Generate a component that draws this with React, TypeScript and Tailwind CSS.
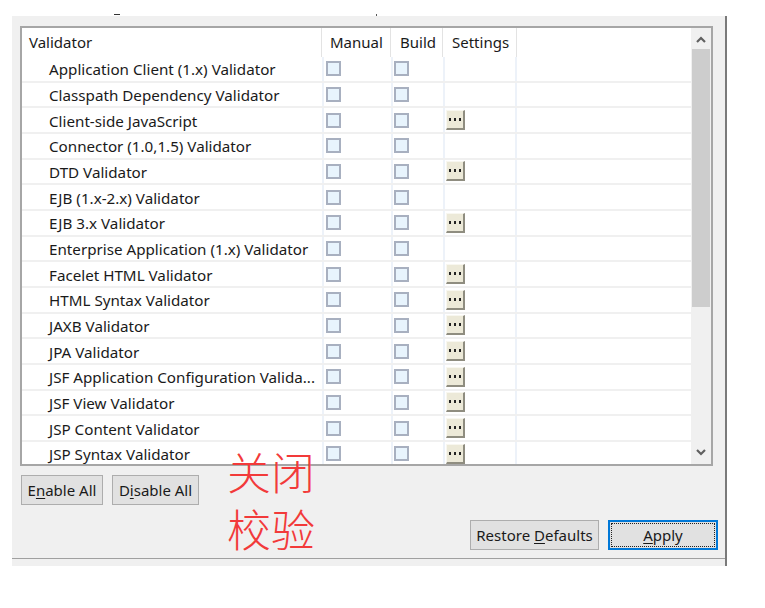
import React from "react";

const rows: { name: string; settings: boolean }[] = [
  { name: "Application Client (1.x) Validator", settings: false },
  { name: "Classpath Dependency Validator", settings: false },
  { name: "Client-side JavaScript", settings: true },
  { name: "Connector (1.0,1.5) Validator", settings: false },
  { name: "DTD Validator", settings: true },
  { name: "EJB (1.x-2.x) Validator", settings: false },
  { name: "EJB 3.x Validator", settings: true },
  { name: "Enterprise Application (1.x) Validator", settings: false },
  { name: "Facelet HTML Validator", settings: true },
  { name: "HTML Syntax Validator", settings: true },
  { name: "JAXB Validator", settings: true },
  { name: "JPA Validator", settings: true },
  { name: "JSF Application Configuration Valida...", settings: true },
  { name: "JSF View Validator", settings: true },
  { name: "JSP Content Validator", settings: true },
  { name: "JSP Syntax Validator", settings: true },
];

const Check = () => (
  <span className="block w-[15px] h-[15px] border-2 border-[#a8b0c0] bg-[#e8f4fd]" />
);

const Dots = () => (
  <span className="flex w-[19px] h-[20px] items-center justify-center gap-[3px] bg-[#ece9d8] border-t border-l border-[#f8f7f0] border-r-2 border-b-2 border-r-[#8f8d80] border-b-[#8f8d80]">
    <span className="w-[2px] h-[3px] bg-[#222]" />
    <span className="w-[2px] h-[3px] bg-[#222]" />
    <span className="w-[2px] h-[3px] bg-[#222]" />
  </span>
);

const Chevron = ({ up }: { up?: boolean }) => (
  <svg width="10" height="7" viewBox="0 0 10 7">
    <polyline
      points={up ? "1,6 5,2 9,6" : "1,1 5,5 9,1"}
      fill="none"
      stroke="#606060"
      strokeWidth="2.2"
    />
  </svg>
);

const Btn = ({ children, w }: { children: React.ReactNode; w: string }) => (
  <button
    className={`${w} h-[30px] bg-[#e1e1e1] border border-[#adadad] text-[15px] text-[#1a1a1a] flex items-center justify-center`}
  >
    {children}
  </button>
);

export default function App() {
  return (
    <div
      className="relative w-[765px] h-[608px] bg-white overflow-hidden"
      style={{ fontFamily: '"Noto Sans", "Noto Sans CJK SC", sans-serif' }}
    >
      <div className="h-[16px] flex items-end">
        <span className="ml-[114px] w-[6px] h-[1px] mb-[1px] bg-[#333]" />
        <span className="ml-[256px] w-[1px] h-[2px] bg-[#555]" />
      </div>

      <div className="ml-[12px] w-[715px] h-[550px] bg-[#f0f0f0] border-r-2 border-[#7a7a7a] flex flex-col">
        <div className="pl-[8px] pt-[10px]">
          {/* table */}
          <div className="w-[693px] h-[440px] border-2 border-[#a6a6a6] bg-white flex overflow-hidden">
            <div className="w-[669px] flex flex-col overflow-hidden">
              <div className="h-[29px] shrink-0 flex text-[15px] text-[#1a1a1a]">
                <div className="w-[300px] pl-[7px] flex items-center border-r border-[#e3e3e3]">Validator</div>
                <div className="w-[69px] pl-[8px] flex items-center border-r border-[#e3e3e3]">Manual</div>
                <div className="w-[52px] pl-[9px] flex items-center border-r border-[#e3e3e3]">Build</div>
                <div className="w-[74px] pl-[9px] flex items-center border-r border-[#e3e3e3]">Settings</div>
              </div>
              {rows.map((r) => (
                <div
                  key={r.name}
                  className="h-[25.67px] shrink-0 flex border-b-2 border-[#f0f0f0] text-[15.2px] text-[#1a1a1a]"
                >
                  <div className="w-[300px] pl-[27px] pt-[2px] flex items-center whitespace-nowrap overflow-hidden">
                    {r.name}
                  </div>
                  <div className="w-[69px] pl-[2px] flex items-center border-l-2 border-[#edf2f9]">
                    <Check />
                  </div>
                  <div className="w-[52px] pl-[1px] flex items-center border-l-2 border-[#edf2f9]">
                    <Check />
                  </div>
                  <div className="w-[74px] pl-[1px] flex items-center border-l-2 border-r-2 border-[#edf2f9]">
                    {r.settings && <Dots />}
                  </div>
                </div>
              ))}
            </div>
            {/* scrollbar */}
            <div className="w-[20px] bg-[#f0f0f0] flex flex-col">
              <div className="h-[21px] flex items-center justify-center pt-[2px]">
                <Chevron up />
              </div>
              <div className="h-[258px] mx-[1px] bg-[#cdcdcd]" />
              <div className="flex-1" />
              <div className="h-[22px] flex items-center justify-center pb-[2px]">
                <Chevron />
              </div>
            </div>
          </div>

          <div className="mt-[9px] ml-[1px] flex gap-[9px]">
            <Btn w="w-[82px]">
              <span>
                E<span className="underline underline-offset-2">n</span>able All
              </span>
            </Btn>
            <Btn w="w-[87px]">
              <span>
                D<span className="underline underline-offset-2">i</span>sable All
              </span>
            </Btn>
          </div>
        </div>

        <div className="mt-[15px] pr-[7px] flex justify-end gap-[9px]">
          <Btn w="w-[129px]">
            <span>
              Restore <span className="underline underline-offset-2">D</span>efaults
            </span>
          </Btn>
          <button className="w-[110px] h-[30px] bg-[#e1e1e1] border-2 border-[#0078d7] p-[1px] text-[15px] text-[#1a1a1a]">
            <span className="w-full h-full flex items-center justify-center border border-dotted border-[#222]">
              <span>
                <span className="underline underline-offset-2">A</span>pply
              </span>
            </span>
          </button>
        </div>

        <div className="mt-[8px] flex-1 border-t border-[#a0a0a0]" />
      </div>

      <div
        className="absolute left-[227px] top-[447px] flex flex-col gap-[9px] text-[44px] leading-[48px] font-light text-[#f23a3a]"
        style={{ fontFamily: '"Noto Sans CJK SC", sans-serif' }}
      >
        <span>关闭</span>
        <span>校验</span>
      </div>
    </div>
  );
}
